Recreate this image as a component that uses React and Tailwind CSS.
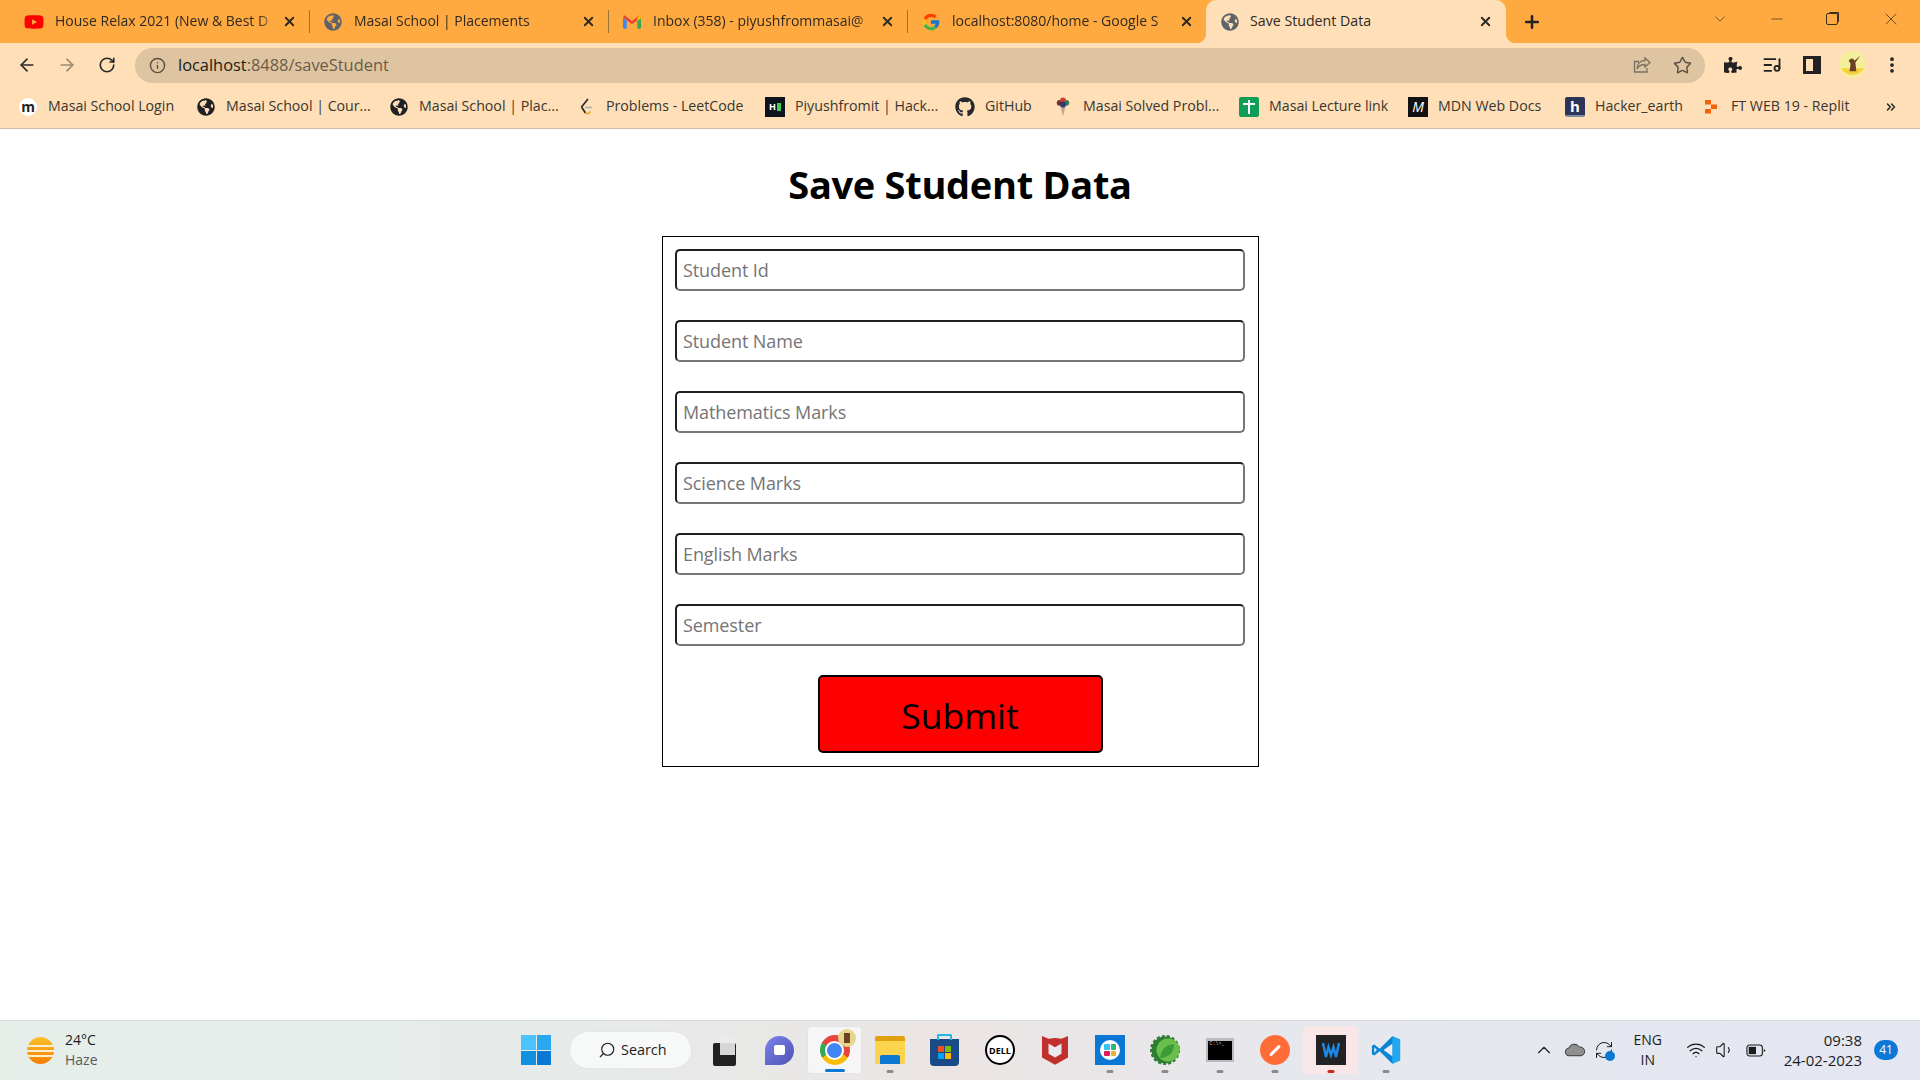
import { ArrowLeft, ArrowRight, RotateCw, Info, Star, X, Plus, ChevronDown, ChevronUp, Minus, EllipsisVertical, ListMusic, Search, Wifi, Volume1, ChevronsRight, RefreshCw } from "lucide-react";
import { FaYoutube, FaGlobeAmericas, FaGithub, FaPuzzlePiece } from "react-icons/fa";
import { FcGoogle } from "react-icons/fc";

const Gmail = () => (
  <svg viewBox="0 0 24 18" className="w-[18px] h-[14px] shrink-0">
    <path d="M0 3v13a2 2 0 0 0 2 2h3V7z" fill="#4285f4" />
    <path d="M24 3v13a2 2 0 0 1-2 2h-3V7z" fill="#34a853" />
    <path d="M0 3l12 9 12-9-2-3-10 7.500L2 0z" fill="#ea4335" />
    <path d="M19 3.500V8l5-4V3l-2-3z" fill="#fbbc04" />
  </svg>
);

const tabs = [
  { title: "House Relax 2021 (New & Best D", icon: <FaYoutube className="w-5 h-5 shrink-0 text-[#f00]" /> },
  { title: "Masai School | Placements", icon: <FaGlobeAmericas className="w-[18px] h-[18px] shrink-0 text-[#5f6368]" /> },
  { title: "Inbox (358) - piyushfrommasai@", icon: <Gmail /> },
  { title: "localhost:8080/home - Google S", icon: <FcGoogle className="w-5 h-5 shrink-0" /> },
];

const Globe = () => <FaGlobeAmericas className="w-[18px] h-[18px] text-[#202124]" />;

const bookmarks = [
  { label: "Masai School Login", w: "w-[178px]", icon: <span className="w-[18px] h-[18px] rounded-full bg-white flex items-center justify-center text-[14px] font-bold leading-none text-[#222]">m</span> },
  { label: "Masai School | Cour...", w: "w-[193px]", icon: <Globe /> },
  { label: "Masai School | Plac...", w: "w-[187px]", icon: <Globe /> },
  {
    label: "Problems - LeetCode",
    w: "w-[189px]",
    icon: (
      <svg viewBox="0 0 16 18" className="w-4 h-[18px]" fill="none" strokeWidth="1.600">
        <path d="M10 1L3.500 9" stroke="#222" />
        <path d="M3.500 9l4 6" stroke="#222" />
        <path d="M7.500 15.500h3l2-2" stroke="#f0a020" />
        <path d="M7 9.500h7" stroke="#b0b0b0" />
      </svg>
    ),
  },
  {
    label: "Piyushfromit | Hack...",
    w: "w-[190px]",
    icon: (
      <span className="w-5 h-5 bg-[#0e141e] flex items-center justify-center gap-[1px]">
        <span className="text-white text-[9px] font-bold leading-none">H</span>
        <span className="w-1 h-2 bg-[#39d353]" />
      </span>
    ),
  },
  { label: "GitHub", w: "w-[98px]", icon: <FaGithub className="w-5 h-5 text-[#24292f]" /> },
  {
    label: "Masai Solved Probl...",
    w: "w-[186px]",
    icon: (
      <svg viewBox="0 0 16 24" className="w-4 h-5">
        <path d="M5 11l3 12 3-12z" fill="#b9a88f" />
        <circle cx="4" cy="7" r="3.500" fill="#7a2b2b" />
        <circle cx="12" cy="7" r="3.500" fill="#3a7a5a" />
        <circle cx="8" cy="4" r="3.500" fill="#c8402f" />
        <circle cx="8" cy="9" r="3.500" fill="#2c3b70" />
      </svg>
    ),
  },
  {
    label: "Masai Lecture link",
    w: "w-[169px]",
    icon: (
      <span className="w-5 h-5 bg-[#0f9d58] rounded-[2px] relative flex items-center justify-center">
        <span className="w-[2px] h-[14px] bg-white" />
        <span className="absolute top-[6px] left-[4px] w-3 h-[2px] bg-white" />
      </span>
    ),
  },
  { label: "MDN Web Docs", w: "w-[157px]", icon: <span className="w-5 h-5 bg-[#111] text-white text-[14px] italic leading-5 text-center">M</span> },
  {
    label: "Hacker_earth",
    w: "w-[136px]",
    icon: (
      <span className="w-5 h-5 bg-[#2c3459] rounded-[2px] text-white text-[15px] font-bold leading-[18px] text-center border-b-2 border-[#8088a8]">h</span>
    ),
  },
  {
    label: "FT WEB 19 - Replit",
    w: "w-[170px]",
    icon: (
      <svg viewBox="0 0 16 16" className="w-4 h-4" fill="#f26207">
        <rect x="2" y="1" width="6" height="4.500" />
        <rect x="8" y="5.500" width="6" height="4.500" />
        <rect x="2" y="10" width="6" height="4.500" />
      </svg>
    ),
  },
];

const fields = ["Student Id", "Student Name", "Mathematics Marks", "Science Marks", "English Marks", "Semester"];

const TabStrip = () => (
  <div className="h-[43px] bg-[#ffaa40] flex pl-[10px] text-[#2f2a22] text-[14px]">
    {tabs.map((tab) => (
      <div key={tab.title} className="w-[299px] h-full flex items-center pl-4 relative">
        <span className="w-4 flex justify-center shrink-0">{tab.icon}</span>
        <span className="ml-[13px] w-[221px] pb-[2px] whitespace-nowrap [mask-image:linear-gradient(to_right,black_92%,transparent)]">{tab.title}</span>
        <X className="w-[15px] h-[15px] ml-[6px] shrink-0" strokeWidth={3} />
        <span className="absolute right-[-1px] top-[10px] h-[23px] w-[1px] bg-[#9a7238]" />
      </div>
    ))}
    <div className="w-[300px] h-full bg-[#ffdfb8] rounded-t-[10px] flex items-center pl-[15px] relative">
      <span className="absolute left-[-10px] bottom-0 w-[10px] h-[10px] bg-[radial-gradient(circle_at_0_0,#ffaa40_10px,#ffdfb8_10.500px)]" />
      <span className="absolute right-[-10px] bottom-0 w-[10px] h-[10px] bg-[radial-gradient(circle_at_100%_0,#ffaa40_10px,#ffdfb8_10.500px)]" />
      <FaGlobeAmericas className="w-[18px] h-[18px] text-[#5f6368] shrink-0" />
      <span className="ml-[11px] w-[222px] pb-[2px] text-[14.200px] whitespace-nowrap">Save Student Data</span>
      <X className="w-[15px] h-[15px] ml-[6px] shrink-0" strokeWidth={3} />
    </div>
    <Plus className="w-[20px] h-[20px] text-[#222] self-center ml-4" strokeWidth={3} />
    <div className="flex-1 flex items-start justify-end text-[#4a3a20]">
      <ChevronDown className="w-[18px] h-[18px] mt-[10px] mr-[39px]" strokeWidth={1} />
      <Minus className="w-[18px] h-[18px] mt-[10px] mr-[40px]" strokeWidth={1} />
      <span className="w-[12px] h-[12px] mt-[13px] mr-[43px] border border-[#3a3020] rounded-[2px] shadow-[2px_-2px_0_-1px_#3a3020]" />
      <X className="w-[20px] h-[20px] mt-[9px] mr-[19px]" strokeWidth={1} />
    </div>
  </div>
);

const Toolbar = () => (
  <div className="h-[43px] bg-[#ffdfb8] flex items-center text-[#2b2b2b]">
    <ArrowLeft className="w-[20px] h-[20px] ml-[17px]" strokeWidth={2} />
    <ArrowRight className="w-[20px] h-[20px] ml-[20px] text-[#9b8872]" strokeWidth={2} />
    <RotateCw className="w-[18px] h-[18px] ml-[21px]" strokeWidth={2.200} />
    <div className="ml-[19px] mt-[1px] w-[1570px] h-[35px] rounded-full bg-[#dec4a1] flex items-center pl-[14px] pr-[13px]">
      <Info className="w-[17px] h-[17px] text-[#5a5040]" strokeWidth={2} />
      <span className="ml-[12px] text-[16.400px] text-[#6a5c48]"><span className="text-[#211d16]">localhost</span>:8488/saveStudent</span>
      <svg viewBox="0 0 20 20" className="w-[20px] h-[20px] ml-auto" fill="none" stroke="#7b705f" strokeWidth="1.300">
        <path d="M13 3l5 4.500L13 12V9.500C8.500 9.500 6.500 11 5 14c0-5 3-8.500 8-8.500z" />
        <path d="M15 13v4H2.500V6.500H7" />
      </svg>
      <Star className="w-[19px] h-[19px] ml-[21px] text-[#5a5040]" strokeWidth={1.800} />
    </div>
    <FaPuzzlePiece className="w-[18px] h-[18px] ml-[19px] text-[#222]" />
    <ListMusic className="w-[20px] h-[20px] ml-[20px] text-[#222]" strokeWidth={2.200} />
    <span className="w-[18px] h-[18px] ml-[21px] border-[3px] border-[#222] border-r-[8px] bg-[#ffdfb8]" />
    <svg viewBox="0 0 28 28" className="w-[27px] h-[27px] ml-[18px]">
      <circle cx="14" cy="14" r="14" fill="#f5ee9c" />
      <path d="M2 18h24a14 14 0 0 1-24 0z" fill="#f7d23e" />
      <path d="M11 21l1-8-2-3 2-2h3l1 2 6-5-5 7 1 9z" fill="#6b4226" />
    </svg>
    <EllipsisVertical className="w-[20px] h-[20px] ml-[16px] text-[#222]" strokeWidth={2.500} />
  </div>
);

const BookmarksBar = () => (
  <div className="h-[43px] bg-[#ffdfb8] border-b border-[#c9bba8] flex items-center pl-[18px] text-[14.200px] text-[#3a362f]">
    {bookmarks.map((b) => (
      <div key={b.label} className={`${b.w} flex items-center shrink-0`}>
        <span className="w-5 flex justify-center">{b.icon}</span>
        <span className="ml-[10px] pb-[3px] whitespace-nowrap">{b.label}</span>
      </div>
    ))}
    <ChevronsRight className="w-[14px] h-[14px] ml-[13px] text-[#222]" strokeWidth={2.500} />
  </div>
);

const StudentForm = () => (
  <main className="flex-1 bg-white flex flex-col items-center">
    <h1 className="mt-[28px] text-[38px] tracking-[-0.300px] leading-[54px] font-bold text-black">Save Student Data</h1>
    <form className="mt-[25px] w-[597px] h-[531px] border border-black px-3 pt-3 flex flex-col items-center">
      {fields.map((f) => (
        <input
          key={f}
          placeholder={f}
          className="w-[570px] h-[42px] mb-[29px] shrink-0 rounded-[5px] border-2 border-t-[#1f1f1f] border-l-[#1f1f1f] border-b-[#767676] border-r-[#767676] px-[6px] text-[18px] tracking-[-0.100px] placeholder:text-[#757575] outline-none"
        />
      ))}
      <button type="button" className="w-[285px] h-[78px] pt-[4px] rounded-[5px] border-2 border-black bg-[#f00] text-[35.500px] text-black">Submit</button>
    </form>
  </main>
);

const Pip = ({ color = "bg-[#8a8a8a]", width = "w-[7px]" }) => (
  <span className={`absolute bottom-[1px] left-1/2 -translate-x-1/2 h-[3px] rounded-full ${width} ${color}`} />
);

const Slot = ({ children, pip, active }) => (
  <div className={`w-[55.100px] h-[48px] shrink-0 flex items-center justify-center relative rounded-[4px] ${active || ""}`}>
    {children}
    {pip}
  </div>
);

const Taskbar = () => (
  <footer className="h-[60px] shrink-0 border-t border-[#d8dcd9] bg-[linear-gradient(90deg,#e6eeea_0%,#e6ebe9_30%,#ebe5e4_50%,#e6e8ee_70%,#e4e6f2_100%)] flex items-center relative">
    {/* weather */}
    <div className="w-[521px] shrink-0 flex items-center pl-[27px]">
      <span className="w-[27px] h-[27px] rounded-full bg-[linear-gradient(180deg,#fbc02d,#f57c00)] flex flex-col justify-center gap-[3px] overflow-hidden">
        <span className="h-[2px] bg-[#fdf0d0]" />
        <span className="h-[2px] bg-[#fdf0d0]" />
        <span className="h-[2px] bg-[#fdf0d0]" />
      </span>
      <div className="ml-[11px] text-[14px] leading-[20px] -mt-[2px]">
        <div className="text-[#1c1c1c]">24°C</div>
        <div className="text-[#5c5c5c]">Haze</div>
      </div>
    </div>

    {/* windows + search */}
    <div className="grid grid-cols-2 gap-[1px] w-[30px] h-[30px] shrink-0 -mt-[1px]">
      <span className="bg-[#4cc2ff]" />
      <span className="bg-[#2aa8ef]" />
      <span className="bg-[#1290e0]" />
      <span className="bg-[#0a78d4]" />
    </div>
    <div className="ml-[18px] w-[123px] h-[38px] -mt-[1px] rounded-full bg-[#f7f8f8] border border-[#e5e5e5] flex items-center pl-[28px] text-[14.400px] text-[#1c1c1c] shrink-0">
      <Search className="w-[18px] h-[18px] -scale-x-100" strokeWidth={1.500} />
      <span className="ml-[5px] pb-[1px]">Search</span>
    </div>

    <div className="flex items-center ml-[5px] -mt-[1px]">
      <Slot>
        <span className="w-[23px] h-[23px] bg-[#222] rounded-[2px] mt-[8px] relative">
          <span className="absolute left-[7px] -top-[8px] w-[15px] h-[20px] bg-[#ecebeb] opacity-90" />
        </span>
      </Slot>
      <Slot>
        <span className="w-[29px] h-[29px] rounded-full rounded-bl-[6px] bg-[linear-gradient(135deg,#7b83eb,#4f52b2)] flex items-center justify-center">
          <span className="w-[11px] h-[10px] bg-white rounded-[2px]" />
        </span>
      </Slot>
      <Slot active="bg-[#f6f6f8] border border-[#e4e4e6]" pip={<Pip color="bg-[#0a78d4]" width="w-[20px]" />}>
        <span className="w-[30px] h-[30px] rounded-full bg-[conic-gradient(#e8453c_0deg_120deg,#fbbc05_120deg_240deg,#34a853_240deg_300deg,#e8453c_300deg)] flex items-center justify-center relative">
          <span className="w-[15px] h-[15px] rounded-full bg-[#4285f4] border-2 border-white box-content" />
          <span className="absolute -right-[6px] -top-[6px] w-[18px] h-[18px] rounded-full bg-[#e6d68a] flex items-center justify-center">
            <span className="w-[6px] h-[10px] bg-[#6b4226]" />
          </span>
        </span>
      </Slot>
      <Slot pip={<Pip />}>
        <span className="w-[30px] h-[28px] bg-[#fcd34d] rounded-[2px] border-t-[5px] border-[#e0a010] flex items-end justify-center">
          <span className="w-[20px] h-[9px] bg-[#0a78d4] rounded-t-[2px]" />
        </span>
      </Slot>
      <Slot>
        <span className="w-[29px] h-[27px] mt-[4px] bg-[#1a4b86] rounded-b-[4px] flex items-center justify-center relative">
          <span className="absolute -top-[5px] left-[7px] w-[15px] h-[6px] border-2 border-b-0 border-[#27b6e8] rounded-t-[2px]" />
          <span className="grid grid-cols-2 gap-[1px] w-[13px] h-[13px]">
            <span className="bg-[#f25022]" />
            <span className="bg-[#7fba00]" />
            <span className="bg-[#00a4ef]" />
            <span className="bg-[#ffb900]" />
          </span>
        </span>
      </Slot>
      <Slot>
        <span className="w-[30px] h-[30px] rounded-full border-[2px] border-black flex items-center justify-center text-[9px] font-bold leading-none text-black bg-white">DELL</span>
      </Slot>
      <Slot>
        <svg viewBox="0 0 28 32" className="w-[26px] h-[30px]">
          <path d="M0 1l7 3 7-1 7 1 7-3v23l-14 8-14-8z" fill="#c0302c" />
          <path d="M7 9l7 4 7-4v11l-7 4-7-4z" fill="#e9e9ee" />
        </svg>
      </Slot>
      <Slot pip={<Pip />}>
        <span className="w-[30px] h-[30px] bg-[#0a78d4] flex items-center justify-center">
          <span className="w-[20px] h-[20px] rounded-full bg-white grid grid-cols-2 gap-[1px] p-[4px]">
            <span className="bg-[#36c5f0] rounded-[1px]" />
            <span className="bg-[#2eb67d] rounded-[1px]" />
            <span className="bg-[#e01e5a] rounded-[1px]" />
            <span className="bg-[#ecb22e] rounded-[1px]" />
          </span>
        </span>
      </Slot>
      <Slot pip={<Pip />}>
        <svg viewBox="0 0 30 30" className="w-[30px] h-[30px]">
          <circle cx="15" cy="15" r="13.500" fill="#2e7d32" strokeDasharray="3 2" stroke="#2e7d32" strokeWidth="3" />
          <circle cx="18" cy="15" r="11.500" fill="#6abf4b" />
          <path d="M10 23C11 14 16 10 24 9c0 8-4 13-14 14z" fill="#3d9a37" />
        </svg>
      </Slot>
      <Slot pip={<Pip />}>
        <span className="w-[28px] h-[24px] bg-black border-2 border-t-[3px] border-[#b8bcc0] text-[#cfcfcf] text-[5px] leading-[7px] font-['Liberation_Mono',monospace] pl-[1px]">C:\&gt;_</span>
      </Slot>
      <Slot pip={<Pip />}>
        <span className="w-[30px] h-[30px] rounded-full bg-[#ff6c37] flex items-center justify-center">
          <span className="w-[14px] h-[3px] bg-white rotate-[-45deg] rounded-full" />
        </span>
      </Slot>
      <Slot active="bg-[#f9e6e6]" pip={<Pip color="bg-[#c42b1c]" />}>
        <svg viewBox="0 0 30 30" className="w-[30px] h-[30px]">
          <rect width="30" height="30" fill="#222" />
          <path d="M7 8l3 14 2.500-10L15 20l2.500-8L20 22l3-14" fill="none" stroke="#1e88e5" strokeWidth="2.500" />
        </svg>
      </Slot>
      <Slot pip={<Pip />}>
        <svg viewBox="0 0 100 100" className="w-[30px] h-[30px]">
          <path d="M71 4L29 46 11 32l-8 4v28l8 4 18-14 42 42 26-11V15z" fill="#0a84d6" />
          <path d="M71 4l26 11v70L71 96z" fill="#22a7f0" />
          <path d="M71 29L42 50l29 21z" fill="#e8ecf2" />
          <path d="M11 41v18l9-9z" fill="#e8ecf2" />
        </svg>
      </Slot>
    </div>

    {/* tray */}
    <div className="ml-auto flex items-center text-[#1c1c1c] -mt-[1px]">
      <ChevronUp className="w-[22px] h-[22px]" strokeWidth={1.200} />
      <svg viewBox="0 0 22 14" className="w-[21px] h-[14px] ml-[10px]">
        <path d="M5 13a4 4 0 0 1-1-8 6 6 0 0 1 11-1 4.500 4.500 0 0 1 2 9z" fill="#8f8f8f" stroke="#333" strokeWidth="1" />
      </svg>
      <span className="relative ml-[8px]">
        <RefreshCw className="w-[20px] h-[20px]" strokeWidth={1.200} />
        <span className="absolute right-[-1px] bottom-[-1px] w-[10px] h-[10px] rounded-full bg-[#0a78d4]" />
      </span>
      <div className="ml-[20px] text-[14px] leading-[20px] text-center">
        <div>ENG</div>
        <div>IN</div>
      </div>
      <Wifi className="w-[20px] h-[20px] ml-[24px]" strokeWidth={1.500} />
      <Volume1 className="w-[20px] h-[20px] ml-[9px]" strokeWidth={1.300} />
      <svg viewBox="0 0 22 14" className="w-[20px] h-[13px] ml-[11px]" fill="none">
        <rect x="1" y="1" width="17" height="12" rx="3" stroke="#1c1c1c" strokeWidth="1.200" />
        <rect x="3" y="3" width="8" height="8" fill="#1c1c1c" />
        <path d="M19.500 5v4l2-2z" fill="#1c1c1c" />
      </svg>
      <div className="ml-[16px] w-[80px] text-[15px] leading-[20px] text-right whitespace-nowrap">
        <div>09:38</div>
        <div>24-02-2023</div>
      </div>
      <span className="ml-[12px] mr-[22px] w-[24px] h-[20px] rounded-full bg-[#0a78d4] text-white text-[12px] leading-[20px] text-center">41</span>
    </div>
  </footer>
);

export default function App() {
  return (
    <div className="h-[1080px] w-[1920px] overflow-hidden flex flex-col font-['Open_Sans',sans-serif]">
      <TabStrip />
      <Toolbar />
      <BookmarksBar />
      <StudentForm />
      <Taskbar />
    </div>
  );
}
